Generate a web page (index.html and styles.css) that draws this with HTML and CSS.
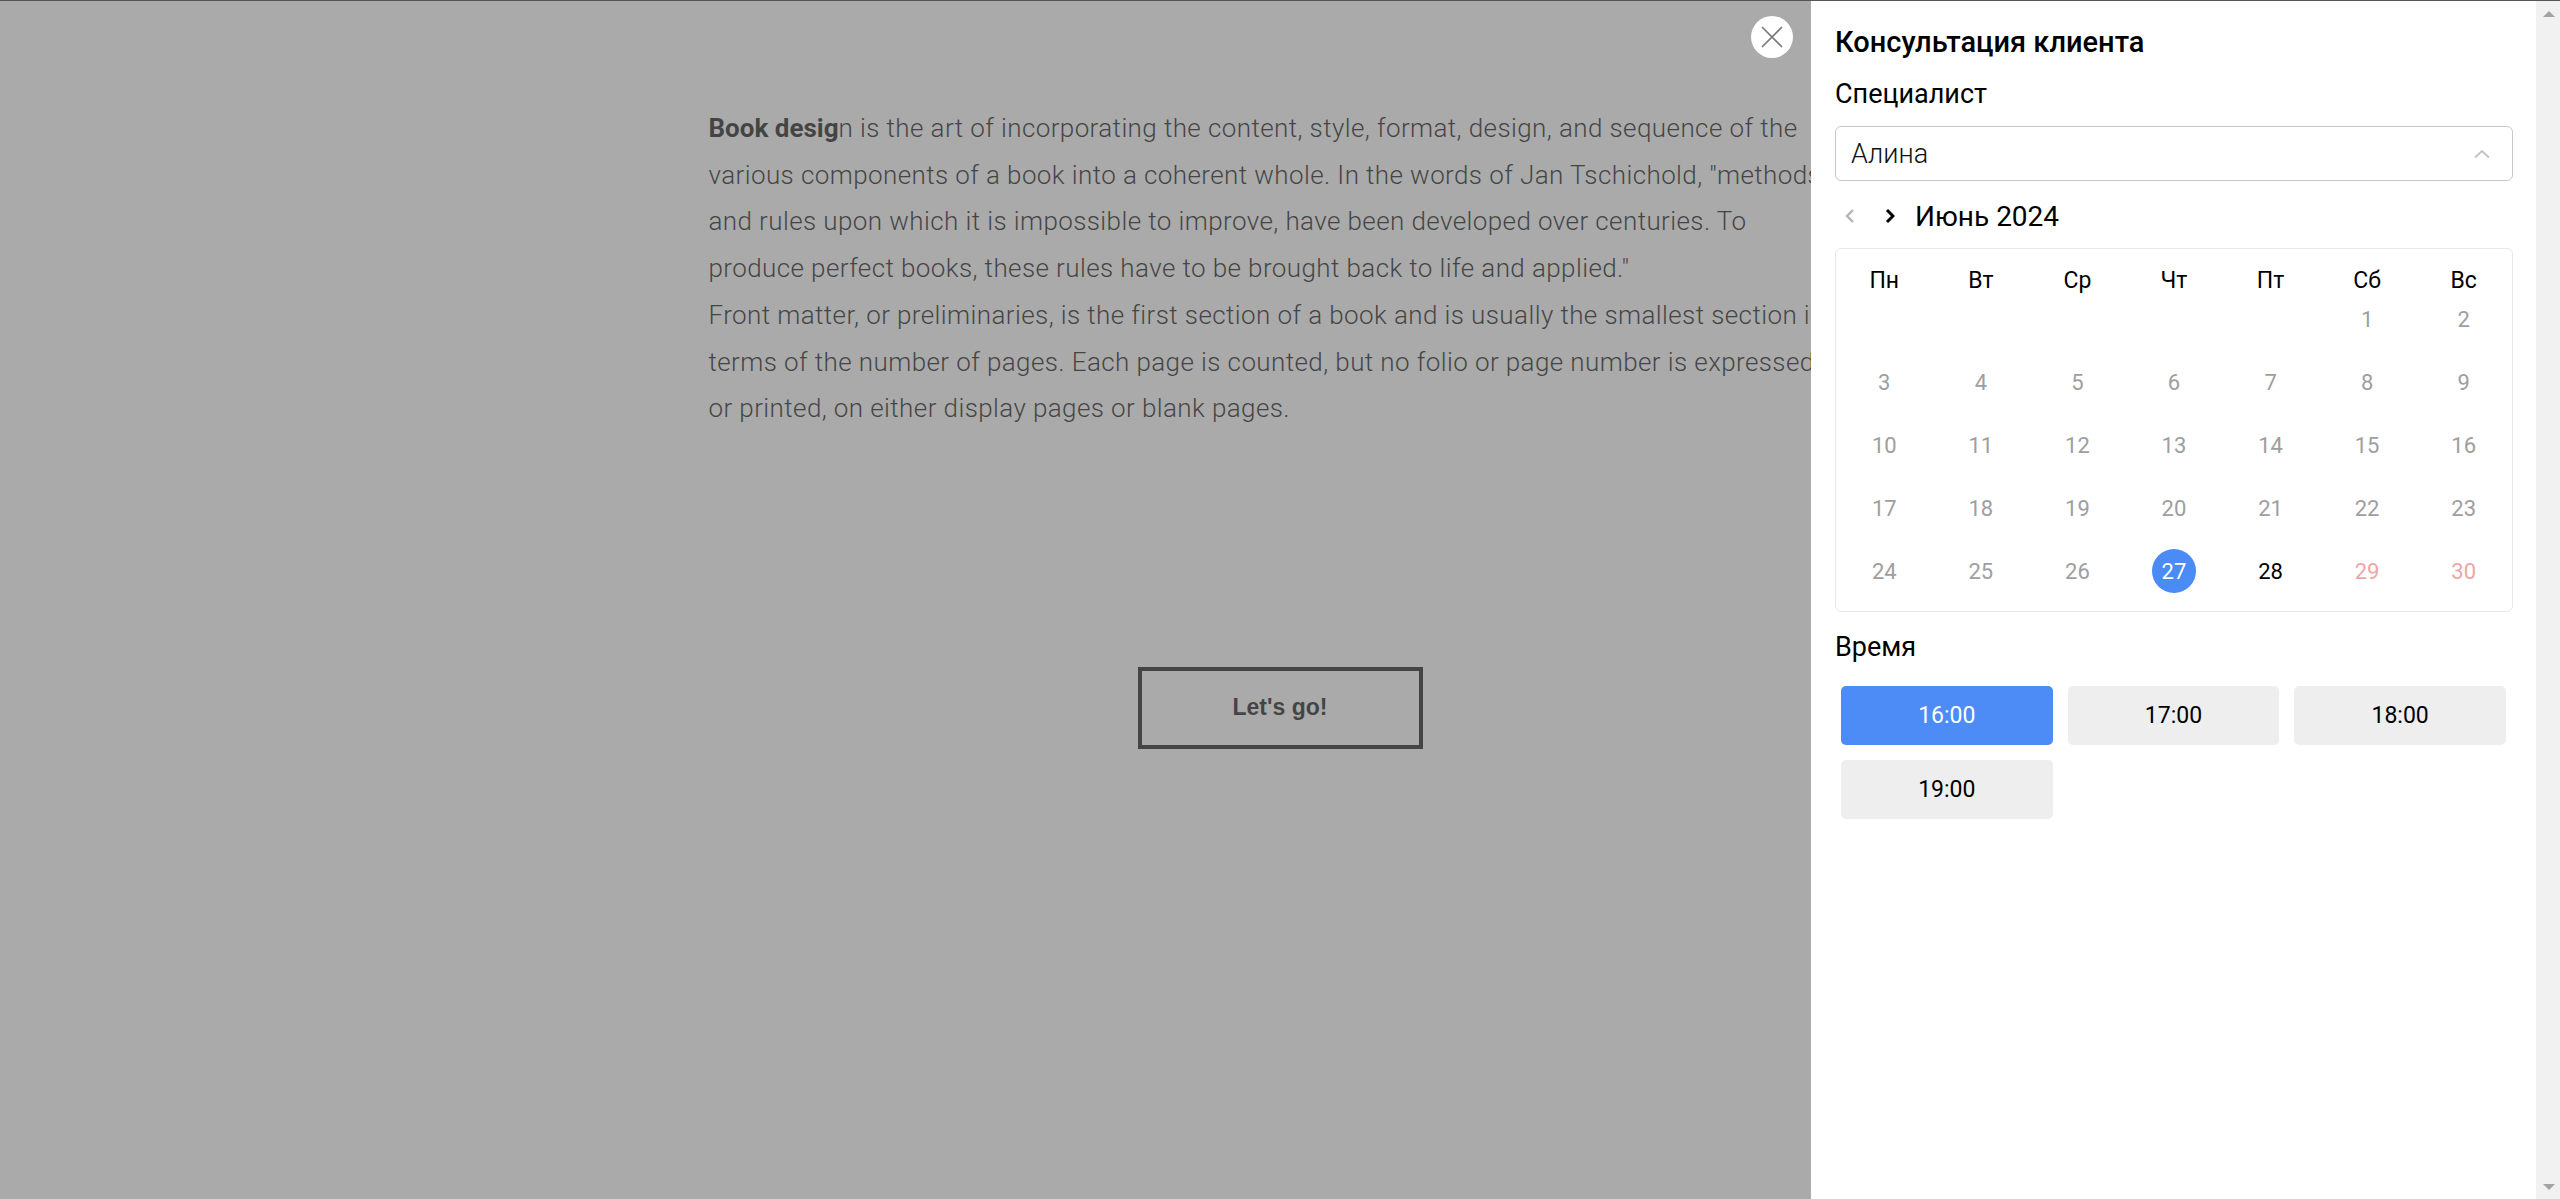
FILE: index.html
```html
<!DOCTYPE html>
<html lang="ru">
<head>
<meta charset="utf-8">
<title>Консультация клиента</title>
<link rel="stylesheet" href="styles.css">
</head>
<body>
<div class="frame-line"></div>
<main class="page">
  <div class="article">
    <p class="text"><strong>Book desig</strong>n is the art of incorporating the content, style, format, design, and sequence of the<br>various components of a book into a coherent whole. In the words of Jan Tschichold, "methods<br>and rules upon which it is impossible to improve, have been developed over centuries. To<br>produce perfect books, these rules have to be brought back to life and applied."<br>Front matter, or preliminaries, is the first section of a book and is usually the smallest section in<br>terms of the number of pages. Each page is counted, but no folio or page number is expressed,<br>or printed, on either display pages or blank pages.</p>
  </div>
  <div class="cta"><a class="btn">Let's go!</a></div>
</main>
<div class="overlay"></div>
<aside class="drawer">
  <button class="close" type="button" aria-label="Закрыть">
    <svg width="22" height="22" viewBox="0 0 22 22"><path d="M1 1 L21 21 M21 1 L1 21" stroke="#7a7a7a" stroke-width="1.7" fill="none"/></svg>
  </button>
  <div class="drawer-body">
    <h2 class="title">Консультация клиента</h2>
    <div class="label">Специалист</div>
    <div class="select">
      <span class="select-value">Алина</span>
      <svg class="select-chevron" width="18" height="10" viewBox="0 0 18 10"><polyline points="2,8.5 9,2 16,8.5" fill="none" stroke="#c4c4c4" stroke-width="2"/></svg>
    </div>
    <div class="month-nav">
      <svg class="nav-prev" width="10" height="16" viewBox="0 0 10 16"><polyline points="8,2 2,8 8,14" fill="none" stroke="#b3b3b3" stroke-width="2.4"/></svg>
      <svg class="nav-next" width="10" height="16" viewBox="0 0 10 16"><polyline points="2,2 8,8 2,14" fill="none" stroke="#000" stroke-width="3"/></svg>
      <span class="month-title">Июнь 2024</span>
    </div>
    <div class="calendar">
      <div class="weekdays">
        <span>Пн</span><span>Вт</span><span>Ср</span><span>Чт</span><span>Пт</span><span>Сб</span><span>Вс</span>
      </div>
      <div class="days">
        <span></span><span></span><span></span><span></span><span></span>
        <span class="day off">1</span><span class="day off">2</span>
        <span class="day off">3</span><span class="day off">4</span><span class="day off">5</span><span class="day off">6</span><span class="day off">7</span><span class="day off">8</span><span class="day off">9</span>
        <span class="day off">10</span><span class="day off">11</span><span class="day off">12</span><span class="day off">13</span><span class="day off">14</span><span class="day off">15</span><span class="day off">16</span>
        <span class="day off">17</span><span class="day off">18</span><span class="day off">19</span><span class="day off">20</span><span class="day off">21</span><span class="day off">22</span><span class="day off">23</span>
        <span class="day off">24</span><span class="day off">25</span><span class="day off">26</span><span class="day selected">27</span><span class="day">28</span><span class="day weekend">29</span><span class="day weekend">30</span>
      </div>
    </div>
    <div class="label time-label">Время</div>
    <div class="slots">
      <span class="slot active">16:00</span>
      <span class="slot">17:00</span>
      <span class="slot">18:00</span>
      <span class="slot">19:00</span>
    </div>
  </div>
  <div class="scrollbar">
    <span class="arrow up"></span>
    <span class="arrow down"></span>
  </div>
</aside>
</body>
</html>
```

FILE: styles.css
```css
* { box-sizing: border-box; }

html, body {
  margin: 0;
  height: 100%;
}

body {
  background: #ffffff;
  font-family: Roboto, "Noto Sans", "DejaVu Sans", sans-serif;
  color: #000;
  overflow: hidden;
}

.frame-line {
  position: fixed;
  top: 0;
  left: 0;
  right: 0;
  height: 1px;
  background: #555;
  z-index: 10;
}

/* background page */
.page {
  padding-top: 105px;
}

.article {
  width: 1143px;
  margin: 0 auto;
}

.text {
  margin: 0;
  font-size: 26px;
  font-weight: 300;
  letter-spacing: 0.4px;
  line-height: 46.7px;
  white-space: nowrap;
  color: #000;
}

.text strong {
  font-weight: 700;
  letter-spacing: 0;
}

.cta {
  margin-top: 235px;
  display: flex;
  justify-content: center;
}

.btn {
  width: 285px;
  height: 82px;
  border: 4px solid #000;
  display: flex;
  align-items: center;
  justify-content: center;
  font-family: "Liberation Sans", Arial, sans-serif;
  font-weight: 700;
  font-size: 23px;
  color: #000;
}

.overlay {
  position: fixed;
  inset: 0;
  background: rgba(113, 113, 113, 0.6);
}

/* drawer */
.drawer {
  position: fixed;
  top: 0;
  right: 0;
  bottom: 0;
  width: 749px;
  background: #fff;
  display: flex;
}

.close {
  position: absolute;
  left: -60px;
  top: 16px;
  width: 42px;
  height: 42px;
  border: 0;
  padding: 0;
  border-radius: 50%;
  background: #fff;
  display: flex;
  align-items: center;
  justify-content: center;
}

.drawer-body {
  flex: 1;
  padding: 24px 23px 0 24px;
}

.title {
  margin: 0;
  font-size: 29px;
  font-weight: 500;
  line-height: 37px;
  color: #000;
}

.label {
  margin-top: 15px;
  font-size: 27px;
  line-height: 36px;
  font-weight: 400;
}

.select {
  margin-top: 14px;
  height: 55px;
  border: 1px solid #c8c8c8;
  border-radius: 6px;
  display: flex;
  align-items: center;
  justify-content: space-between;
  padding: 0 21px 0 15px;
}

.select-value {
  font-size: 27px;
  font-weight: 300;
  color: #111;
}

.month-nav {
  margin-top: 17px;
  height: 36px;
  display: flex;
  align-items: center;
  padding-left: 10px;
}

.nav-next {
  margin-left: 30px;
}

.month-title {
  margin-left: 20px;
  font-size: 28px;
  font-weight: 400;
}

.calendar {
  margin-top: 14px;
  border: 1px solid #e8e8e8;
  border-radius: 6px;
  padding: 19px 0 18px;
}

.weekdays,
.days {
  display: grid;
  grid-template-columns: repeat(7, 1fr);
}

.weekdays {
  height: 26px;
  margin-bottom: 3px;
}

.weekdays span {
  text-align: center;
  font-size: 23px;
  line-height: 26px;
  color: #000;
}

.days {
  row-gap: 19px;
  justify-items: center;
}

.day {
  width: 44px;
  height: 44px;
  border-radius: 50%;
  display: flex;
  align-items: center;
  justify-content: center;
  font-size: 22px;
  color: #000;
}

.day.off { color: #9e9e9e; }
.day.weekend { color: #eea6a6; }
.day.selected {
  background: #4b8bf5;
  color: #fff;
}

.time-label {
  margin-top: 17px;
}

.slots {
  margin-top: 21px;
  padding: 0 7px 0 6px;
  display: grid;
  grid-template-columns: repeat(3, 1fr);
  gap: 15px;
}

.slot {
  height: 59px;
  border-radius: 5px;
  background: #eeeeee;
  display: flex;
  align-items: center;
  justify-content: center;
  font-size: 23px;
  color: #000;
}

.slot.active {
  background: #4d8bf6;
  color: #fff;
}

/* scrollbar track */
.scrollbar {
  width: 24px;
  background: #f1f1f1;
  display: flex;
  flex-direction: column;
  justify-content: space-between;
  align-items: center;
  padding: 11px 0 9px 1px;
}

.arrow {
  width: 0;
  height: 0;
  border-left: 6px solid transparent;
  border-right: 6px solid transparent;
}

.arrow.up { border-bottom: 6px solid #a3a3a3; }
.arrow.down { border-top: 6px solid #a3a3a3; }
```
